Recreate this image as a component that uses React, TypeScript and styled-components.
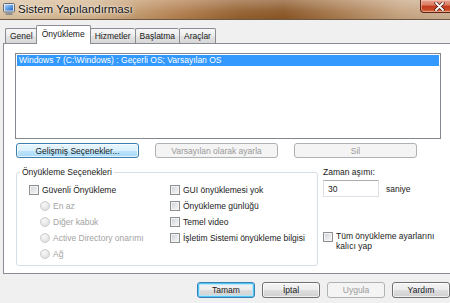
import React from 'react';
import styled, { createGlobalStyle, css } from 'styled-components';

const UI_FONT = `"Liberation Sans", Arial, sans-serif`;

const PageStyle = createGlobalStyle`
  html, body {
    margin: 0;
    padding: 0;
    background: #f0f0f0;
  }
  #root {
    width: 450px;
    height: 303px;
    overflow: hidden;
  }
`;

const Window = styled.div`
    width: 458px;
    height: 303px;
    display: flex;
    flex-direction: column;
    background: #f0f0f0;
    font-family: ${UI_FONT};
    font-size: 8.5px;
    color: #1a1a1a;
`;

const TitleBar = styled.div`
    height: 20px;
    flex: none;
    box-sizing: border-box;
    display: flex;
    align-items: flex-start;
    border-bottom: 1px solid #6f5842;
    background:
        linear-gradient(rgba(255, 255, 255, 0.28), rgba(255, 255, 255, 0.05) 60%, rgba(0, 0, 0, 0.04)),
        linear-gradient(90deg, #dcc3a2 0%, #d2b38c 20%, #b58252 38%, #93602f 52%, #8a5626 62%, #a97b4f 74%, #c7a582 88%, #cdb194 100%);
`;

const TitleIcon = styled.svg`
    margin: 3px 0 0 3px;
    flex: none;
`;

const TitleText = styled.span`
    margin: 2px 0 0 3px;
    font-size: 11.5px;
    line-height: 14px;
    color: #111;
    text-shadow: 0 0 5px rgba(255, 255, 255, 0.9), 0 0 2px rgba(255, 255, 255, 0.8);
`;

const CloseButton = styled.div`
    margin-left: auto;
    width: 38px;
    height: 13px;
    box-sizing: border-box;
    display: flex;
    align-items: center;
    justify-content: center;
    border: 1px solid #5e2416;
    border-top: none;
    border-radius: 0 0 4px 4px;
    background: linear-gradient(#e9a592 0%, #d97a60 42%, #c23a1c 52%, #c84b26 80%, #da7a4e 100%);
    box-shadow: inset 0 0 0 1px rgba(255, 220, 200, 0.45);
`;

const TabStrip = styled.div`
    height: 23px;
    flex: none;
    display: flex;
    align-items: flex-end;
    padding-left: 5px;
    position: relative;
    z-index: 1;
`;

const Tab = styled.div<{ $active?: boolean }>`
    height: 15px;
    box-sizing: border-box;
    padding: 0 4px;
    display: flex;
    align-items: center;
    border: 1px solid #898c95;
    border-bottom: none;
    border-right: none;
    border-radius: 2px 2px 0 0;
    background: linear-gradient(#f7f7f7, #ececec 50%, #e2e2e2 51%, #d8d8d8);
    white-space: nowrap;
    &:last-child {
        border-right: 1px solid #898c95;
    }
    ${(p) =>
        p.$active &&
        css`
            height: 19px;
            margin: 0 -1px -1px -1px;
            padding: 0 5px 2px;
            border-right: 1px solid #898c95;
            background: #ffffff;
            position: relative;
            z-index: 2;
        `}
`;

const TabPage = styled.div`
    flex: none;
    width: 452px;
    height: 231px;
    margin-left: 3px;
    box-sizing: border-box;
    border: 1px solid #898c95;
    background: #ffffff;
    padding: 9px 0 0 11px;
    display: flex;
    flex-direction: column;
`;

const ListBox = styled.div`
    width: 426px;
    height: 86px;
    box-sizing: border-box;
    border: 1px solid #828790;
    padding: 1px;
    background: #fff;
`;

const ListRow = styled.div<{ $selected?: boolean }>`
    height: 11px;
    line-height: 11px;
    padding-left: 2px;
    white-space: nowrap;
    ${(p) =>
        p.$selected &&
        css`
            background: #3399ff;
            color: #ffffff;
        `}
`;

const ActionRow = styled.div`
    display: flex;
    gap: 16px;
    margin-top: 4px;
    padding-left: 1px;
`;

const Button = styled.button<{ $look?: 'hot' | 'default' }>`
    box-sizing: border-box;
    margin: 0;
    padding: 0;
    font-family: ${UI_FONT};
    font-size: 8.5px;
    color: #1a1a1a;
    border: 1px solid #707070;
    border-radius: 3px;
    background: linear-gradient(#f4f4f4 0%, #ececec 50%, #dedede 51%, #d0d0d0 100%);
    box-shadow: inset 0 0 0 1px rgba(255, 255, 255, 0.7);
    ${(p) =>
        p.$look === 'hot' &&
        css`
            border-color: #3c7fb1;
            background: linear-gradient(#eaf6fd 0%, #d9f0fc 50%, #bee6fd 51%, #a7d9f5 100%);
        `}
    ${(p) =>
        p.$look === 'default' &&
        css`
            border-color: #3c7fb1;
            box-shadow: inset 0 0 0 1px #52c6f3, inset 0 0 1px 2px #b7e6fa;
        `}
    &:disabled {
        border-color: #adb2b5;
        background: #f4f4f4;
        box-shadow: none;
        color: #9a9a9a;
    }
`;

const ActionButton = styled(Button)`
    width: 123px;
    height: 15px;
`;

const DialogButton = styled(Button)`
    width: 58px;
    height: 16px;
`;

const LowerArea = styled.div`
    display: flex;
    margin-top: 9px;
    padding-left: 1px;
    gap: 5px;
`;

const Group = styled.fieldset`
    width: 302px;
    height: 99px;
    box-sizing: border-box;
    margin: 0;
    padding: 5px 0 0 12px;
    border: 1px solid #d5dfe5;
    border-radius: 3px;
    min-inline-size: 0;
`;

const Legend = styled.legend`
    margin-left: -9px;
    padding: 0 2px;
    line-height: 10px;
`;

const OptionGrid = styled.div`
    display: grid;
    grid-template-columns: 141px 1fr;
    grid-template-rows: repeat(5, 16px);
    grid-auto-flow: column;
`;

const Option = styled.label<{ $indent?: boolean; $disabled?: boolean }>`
    display: flex;
    align-items: center;
    gap: 3px;
    white-space: nowrap;
    padding-left: ${(p) => (p.$indent ? '11px' : '0')};
    color: ${(p) => (p.$disabled ? '#a3a3a3' : 'inherit')};
`;

const CheckBox = styled.span`
    flex: none;
    width: 10px;
    height: 10px;
    box-sizing: border-box;
    border: 1px solid #8e8f8f;
    background: linear-gradient(135deg, #cbcfd4 0%, #e6e8ea 55%, #f7f7f7 100%);
    box-shadow: inset 0 0 0 1px #f4f4f4;
`;

const Radio = styled.span`
    flex: none;
    width: 10px;
    height: 10px;
    box-sizing: border-box;
    border-radius: 50%;
    border: 1px solid #cdcdcd;
    background: radial-gradient(circle at 40% 35%, #f8f8f8, #e2e2e2 70%);
`;

const SidePanel = styled.div`
    display: flex;
    flex-direction: column;
`;

const SideLabel = styled.div`
    line-height: 10px;
`;

const TimeoutRow = styled.div`
    display: flex;
    align-items: center;
    gap: 7px;
    margin-top: 3px;
`;

const TextInput = styled.div`
    width: 56px;
    height: 17px;
    box-sizing: border-box;
    display: flex;
    align-items: center;
    padding-left: 4px;
    border: 1px solid #dbdfe6;
    border-top-color: #abadb3;
    background: #fff;
`;

const PersistOption = styled.label`
    display: flex;
    align-items: flex-start;
    gap: 3px;
    margin-top: 35px;
    line-height: 9.5px;
`;

const ButtonBar = styled.div`
    display: flex;
    justify-content: flex-end;
    gap: 7px;
    margin-top: 8px;
    padding-right: 8px;
`;

const MonitorIcon = () => (
    <TitleIcon width="12" height="12" viewBox="0 0 12 12">
        <defs>
            <linearGradient id="scr" x1="0" y1="0" x2="1" y2="1">
                <stop offset="0" stopColor="#9fd3ff" />
                <stop offset="1" stopColor="#1c64c8" />
            </linearGradient>
        </defs>
        <rect x="0.5" y="0.5" width="11" height="8.5" rx="1" fill="#e4e8ee" stroke="#5f6b7a" />
        <rect x="2" y="2" width="8" height="5.5" fill="url(#scr)" />
        <rect x="4.5" y="9" width="3" height="1.5" fill="#8a95a3" />
        <rect x="2.5" y="10.5" width="7" height="1.2" fill="#6d7886" />
    </TitleIcon>
);

const CloseGlyph = () => (
    <svg width="11" height="9" viewBox="0 0 11 9">
        <path d="M2 1 L9 8 M9 1 L2 8" stroke="#4a1a10" strokeWidth="3.2" strokeLinecap="round" />
        <path d="M2 1 L9 8 M9 1 L2 8" stroke="#ffffff" strokeWidth="1.8" strokeLinecap="round" />
    </svg>
);

const tabs = ['Genel', 'Önyükleme', 'Hizmetler', 'Başlatma', 'Araçlar'];

const bootFlags = ['GUI önyüklemesi yok', 'Önyükleme günlüğü', 'Temel video', 'İşletim Sistemi önyükleme bilgisi'];
const safeModes = ['En az', 'Diğer kabuk', 'Active Directory onarımı', 'Ağ'];

const App = () => {
    return (
        <>
            <PageStyle />
            <Window>
                <TitleBar>
                    <MonitorIcon />
                    <TitleText>Sistem Yapılandırması</TitleText>
                    <CloseButton>
                        <CloseGlyph />
                    </CloseButton>
                </TitleBar>

                <TabStrip>
                    {tabs.map((t) => (
                        <Tab key={t} $active={t === 'Önyükleme'}>
                            {t}
                        </Tab>
                    ))}
                </TabStrip>

                <TabPage>
                    <ListBox>
                        <ListRow $selected>Windows 7 (C:\Windows) : Geçerli OS; Varsayılan OS</ListRow>
                    </ListBox>

                    <ActionRow>
                        <ActionButton $look="hot">Gelişmiş Seçenekler...</ActionButton>
                        <ActionButton disabled>Varsayılan olarak ayarla</ActionButton>
                        <ActionButton disabled>Sil</ActionButton>
                    </ActionRow>

                    <LowerArea>
                        <Group>
                            <Legend>Önyükleme Seçenekleri</Legend>
                            <OptionGrid>
                                <Option>
                                    <CheckBox />
                                    Güvenli Önyükleme
                                </Option>
                                {safeModes.map((m) => (
                                    <Option key={m} $indent $disabled>
                                        <Radio />
                                        {m}
                                    </Option>
                                ))}
                                {bootFlags.map((f) => (
                                    <Option key={f}>
                                        <CheckBox />
                                        {f}
                                    </Option>
                                ))}
                            </OptionGrid>
                        </Group>

                        <SidePanel>
                            <SideLabel>Zaman aşımı:</SideLabel>
                            <TimeoutRow>
                                <TextInput>30</TextInput>
                                saniye
                            </TimeoutRow>
                            <PersistOption>
                                <CheckBox />
                                <span>
                                    Tüm önyükleme ayarlarını
                                    <br />
                                    kalıcı yap
                                </span>
                            </PersistOption>
                        </SidePanel>
                    </LowerArea>
                </TabPage>

                <ButtonBar>
                    <DialogButton $look="default">Tamam</DialogButton>
                    <DialogButton>İptal</DialogButton>
                    <DialogButton disabled>Uygula</DialogButton>
                    <DialogButton>Yardım</DialogButton>
                </ButtonBar>
            </Window>
        </>
    );
};

export default App;
